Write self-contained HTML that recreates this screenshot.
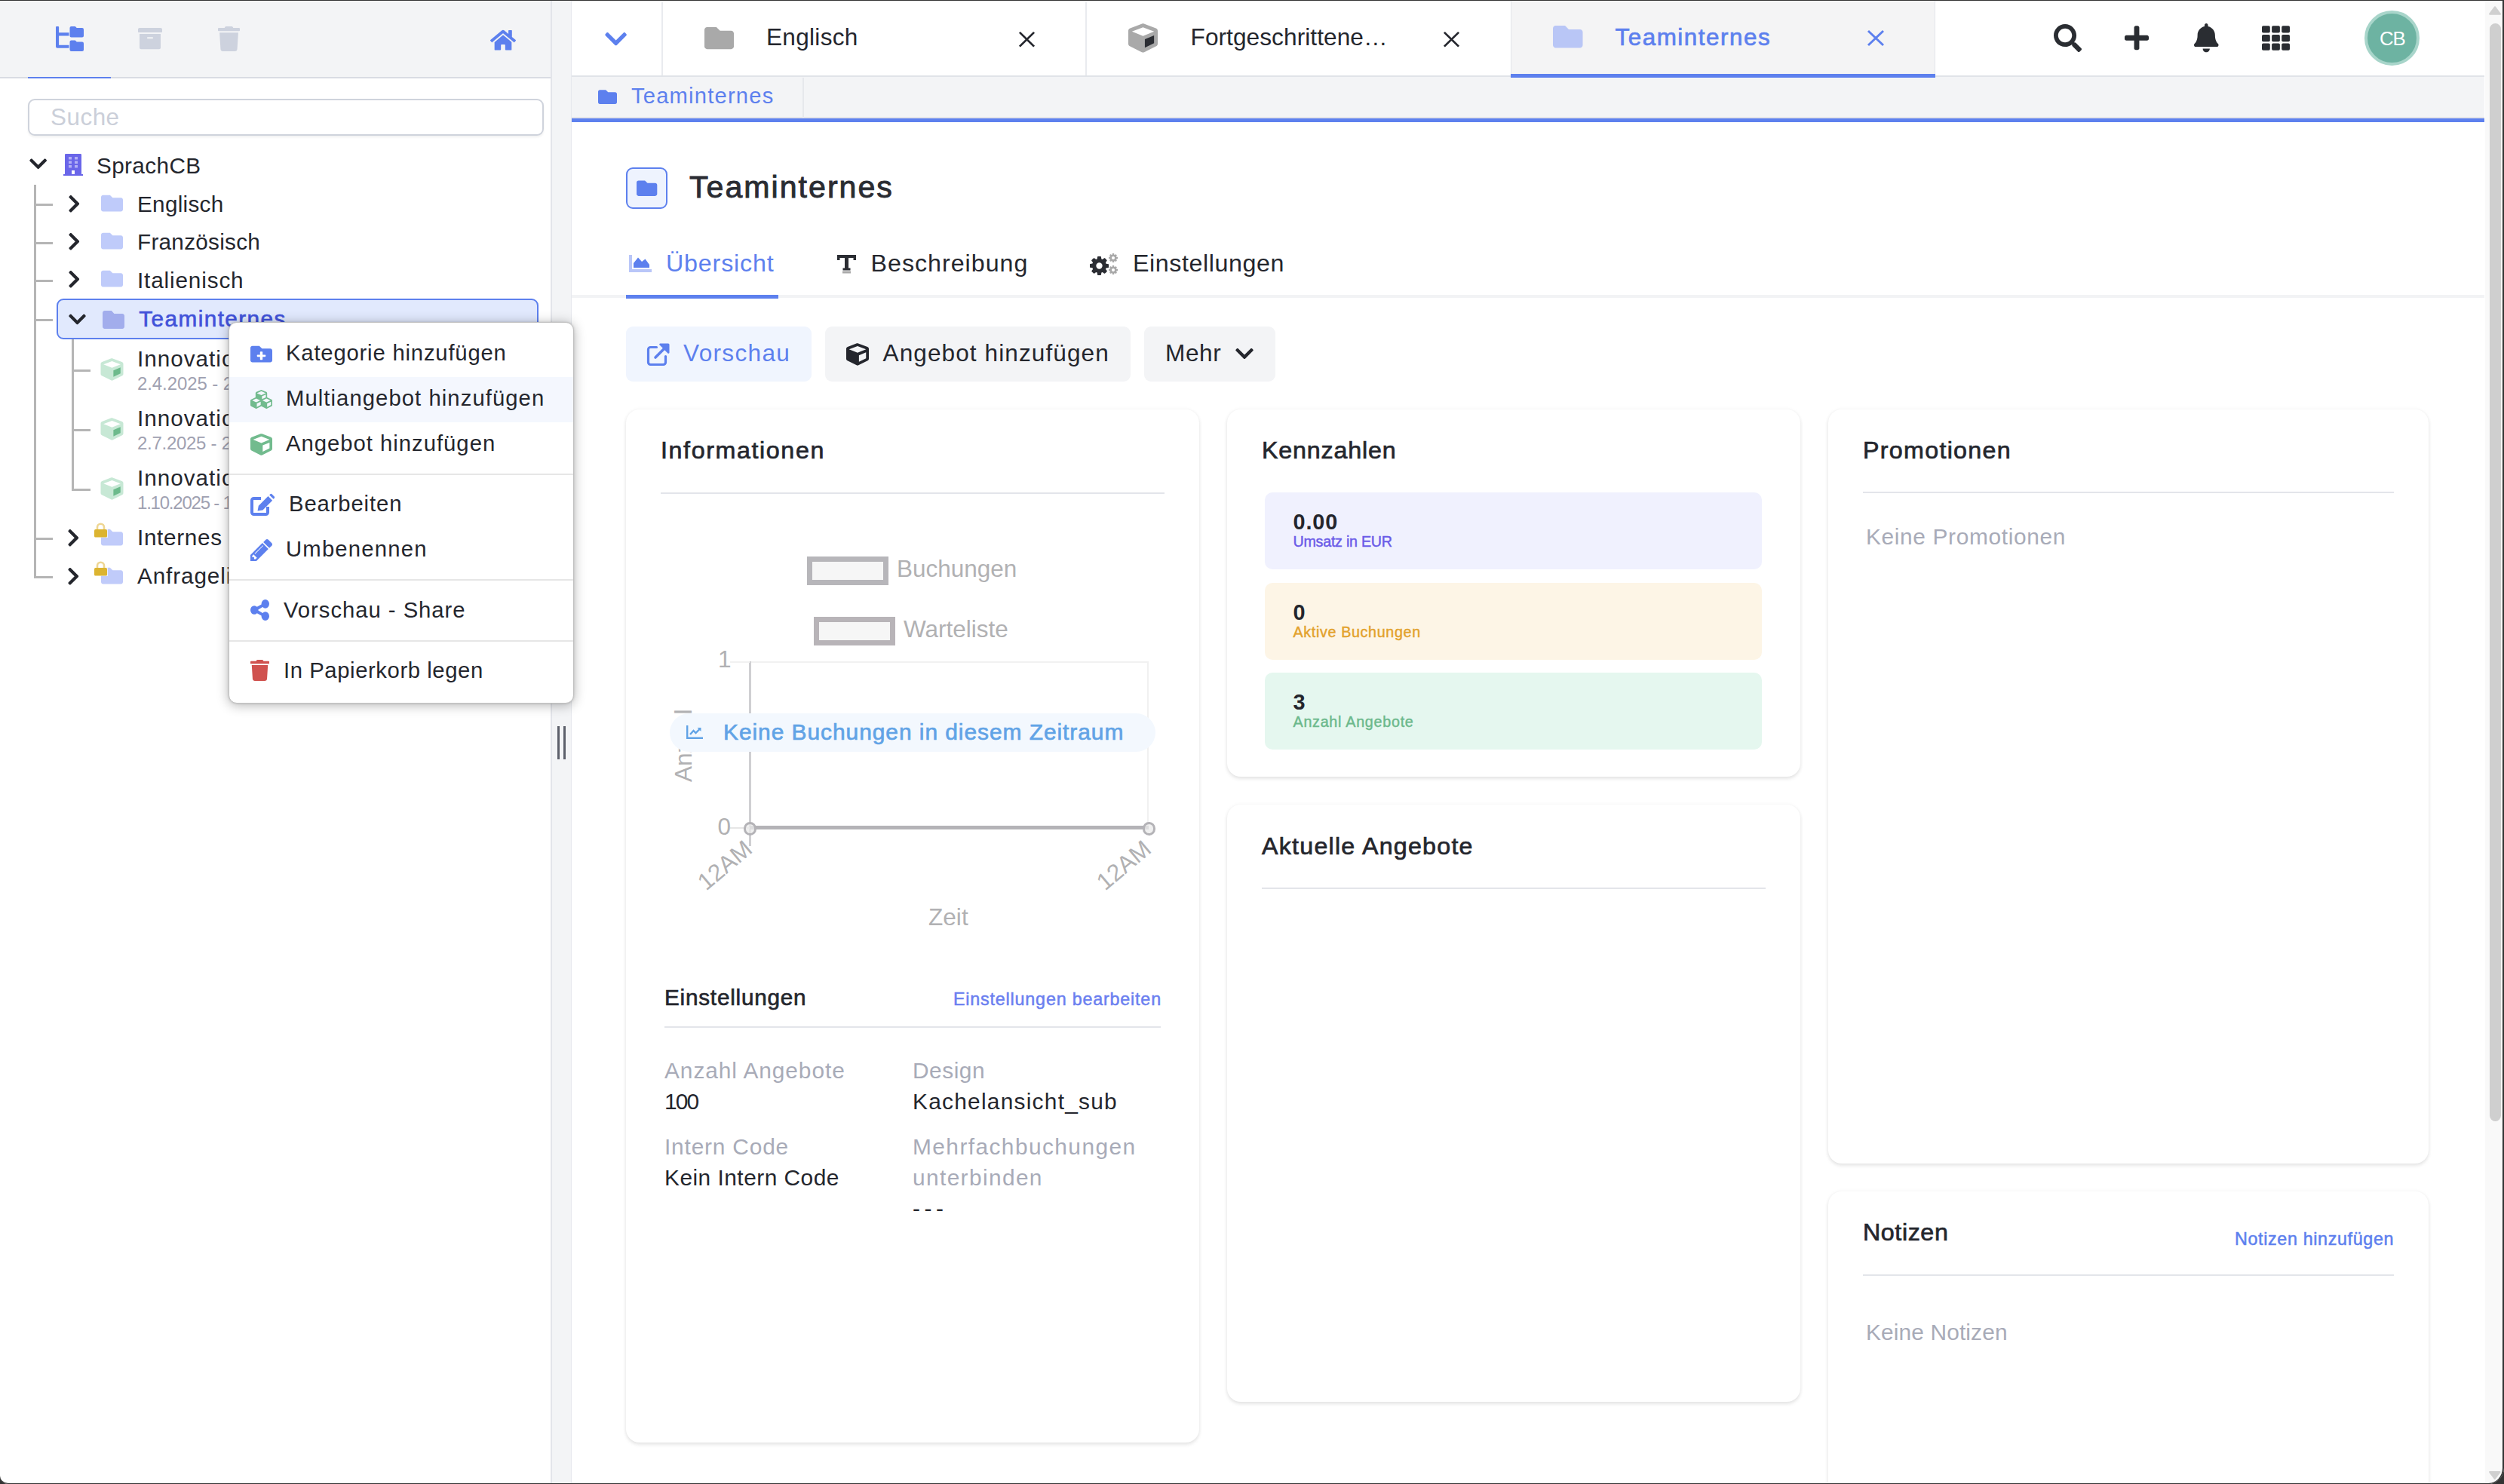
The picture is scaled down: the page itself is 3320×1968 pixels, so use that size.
<!DOCTYPE html>
<html lang="de"><head><meta charset="utf-8"><title>Teaminternes</title>
<style>
*{box-sizing:border-box;margin:0;padding:0}
html,body{width:3320px;height:1968px;overflow:hidden;background:#fff}
body{position:relative;font-family:'Liberation Sans',sans-serif;color:#24262d}
.b{position:absolute}
.t{position:absolute;white-space:nowrap;display:block}
.ic{position:absolute;display:block;overflow:visible}
.card{position:absolute;background:#fff;border-radius:18px;box-shadow:0 3px 5px rgba(0,0,0,.09),0 0 5px rgba(0,0,0,.055)}
.hr{position:absolute;height:2px;background:#e3e5ea}
</style></head>
<body>
<div class="b" style="left:0px;top:0px;width:731px;height:1968px;background:#fff"></div>
<div class="b" style="left:0px;top:0px;width:731px;height:104px;background:#f3f4f6;border-bottom:2px solid #d9dce3"></div>
<div class="b" style="left:37px;top:101.5px;width:110px;height:2.5px;background:#5d80ee"></div>
<svg class="ic" style="left:74px;top:35px;width:37px;height:33px;color:#5d80ee;" viewBox="0 0 576 512" preserveAspectRatio="xMidYMid meet" fill="currentColor"><path d="M0 16a16 16 0 0 1 16-16h32a16 16 0 0 1 16 16v112h208v64H64v192h208v64H32a32 32 0 0 1-32-32z"/><path d="M544 32H432L400 0h-80a32 32 0 0 0-32 32v160a32 32 0 0 0 32 32h224a32 32 0 0 0 32-32V64a32 32 0 0 0-32-32z"/><path d="M544 320H432l-32-32h-80a32 32 0 0 0-32 32v160a32 32 0 0 0 32 32h224a32 32 0 0 0 32-32V352a32 32 0 0 0-32-32z"/></svg>
<svg class="ic" style="left:183px;top:34.9px;width:32px;height:32.3px;color:#cdd2de;" viewBox="0 0 512 512" preserveAspectRatio="none" fill="currentColor"><path d="M32 448c0 17.7 14.3 32 32 32h384c17.7 0 32-14.3 32-32V160H32v288zm160-212c0-6.600 5.400-12 12-12h104c6.600 0 12 5.400 12 12v8c0 6.600-5.400 12-12 12H204c-6.600 0-12-5.400-12-12v-8zM480 32H32C14.300 32 0 46.300 0 64v48c0 8.800 7.200 16 16 16h480c8.800 0 16-7.200 16-16V64c0-17.700-14.300-32-32-32z" /></svg>
<svg class="ic" style="left:289px;top:35px;width:29px;height:33px;color:#cdd2de;" viewBox="0 0 448 512" preserveAspectRatio="none" fill="currentColor"><path d="M432 32H312l-9.4-18.7A24 24 0 0 0 281.1 0H166.8a23.72 23.72 0 0 0-21.4 13.3L136 32H16A16 16 0 0 0 0 48v32a16 16 0 0 0 16 16h416a16 16 0 0 0 16-16V48a16 16 0 0 0-16-16zM53.2 467a48 48 0 0 0 47.9 45h245.8a48 48 0 0 0 47.9-45L416 128H32z" /></svg>
<svg class="ic" style="left:650px;top:37.9px;width:34px;height:30.5px;color:#5d80ee;" viewBox="0 0 576 512" preserveAspectRatio="none" fill="currentColor"><path d="M280.37 148.26L96 300.11V464a16 16 0 0 0 16 16l112.06-.29a16 16 0 0 0 15.92-16V368a16 16 0 0 1 16-16h64a16 16 0 0 1 16 16v95.64a16 16 0 0 0 16 16.05L464 480a16 16 0 0 0 16-16V300L295.67 148.26a12.19 12.19 0 0 0-15.3 0zM571.6 251.47L488 182.56V44.05a12 12 0 0 0-12-12h-56a12 12 0 0 0-12 12v72.61L318.47 43a48 48 0 0 0-61 0L4.34 251.47a12 12 0 0 0-1.6 16.9l25.5 31A12 12 0 0 0 45.15 301l235.22-193.74a12.19 12.19 0 0 1 15.3 0L530.9 301a12 12 0 0 0 16.9-1.6l25.5-31a12 12 0 0 0-1.7-16.93z" /></svg>
<div class="b" style="left:730px;top:0px;width:28px;height:1968px;background:#f3f4f6;border-left:2px solid #e3e5ea;border-right:1px solid #e7e9ee"></div>
<div class="b" style="left:738.5px;top:963px;width:3px;height:44px;background:#5d606b"></div>
<div class="b" style="left:747px;top:963px;width:3px;height:44px;background:#5d606b"></div>
<div class="b" style="left:37px;top:131px;width:684px;height:49px;background:#fff;border:2px solid #cfd3dc;border-radius:9px;box-shadow:0 2px 3px rgba(0,0,0,.06)"></div>
<span class="t" style="left:67.00px;top:140.09px;font-size:31.38px;line-height:31.38px;color:#cbcfd9;font-weight:400;letter-spacing:0.522px;">Suche</span>
<div class="b" style="left:45px;top:245px;width:3px;height:520px;background:#b5b5b5"></div>
<div class="b" style="left:45px;top:269.5px;width:25px;height:3px;background:#b5b5b5"></div>
<div class="b" style="left:45px;top:320.5px;width:25px;height:3px;background:#b5b5b5"></div>
<div class="b" style="left:45px;top:371px;width:25px;height:3px;background:#b5b5b5"></div>
<div class="b" style="left:45px;top:423px;width:25px;height:3px;background:#b5b5b5"></div>
<div class="b" style="left:45px;top:713px;width:25px;height:3px;background:#b5b5b5"></div>
<div class="b" style="left:45px;top:764px;width:25px;height:3px;background:#b5b5b5"></div>
<div class="b" style="left:95px;top:450px;width:3px;height:200px;background:#b5b5b5"></div>
<div class="b" style="left:95px;top:490px;width:25px;height:3px;background:#b5b5b5"></div>
<div class="b" style="left:95px;top:569px;width:25px;height:3px;background:#b5b5b5"></div>
<div class="b" style="left:95px;top:648px;width:25px;height:3px;background:#b5b5b5"></div>
<svg class="ic" style="left:38.9px;top:204.3px;width:23.3px;height:26.6px;color:#24262d;" viewBox="0 0 448 512" preserveAspectRatio="none" fill="currentColor"><path d="M207.029 381.476L12.686 187.132c-9.373-9.373-9.373-24.569 0-33.941l22.667-22.667c9.357-9.357 24.522-9.375 33.901-.04L224 284.505l154.745-154.021c9.379-9.335 24.544-9.317 33.901.04l22.667 22.667c9.373 9.373 9.373 24.569 0 33.941L240.971 381.476c-9.373 9.372-24.569 9.372-33.942 0z" /></svg>
<svg class="ic" style="left:84px;top:204px;width:26px;height:29px" viewBox="0 0 26 29"><path d="M3.200 0H22.800A1.200 1.200 0 0 1 24 1.200V27H2V1.200A1.200 1.200 0 0 1 3.200 0z" fill="#6a66e9"/><rect x="0" y="27" width="26" height="2" fill="#6a66e9"/><g fill="#b3b0f5"><rect x="7" y="4" width="4" height="3.500"/><rect x="15" y="4" width="4" height="3.500"/><rect x="7" y="9.500" width="4" height="3.500"/><rect x="15" y="9.500" width="4" height="3.500"/><rect x="7" y="15" width="4" height="3.500"/><rect x="15" y="15" width="4" height="3.500"/></g><rect x="11" y="22" width="4" height="5" fill="#fff"/></svg>
<span class="t" style="left:128.00px;top:204.53px;font-size:29.68px;line-height:29.68px;color:#24262d;font-weight:400;letter-spacing:0.395px;">SprachCB</span>
<svg class="ic" style="left:89.7px;top:256.5px;width:16.6px;height:26.5px;color:#24262d;" viewBox="0 0 320 512" preserveAspectRatio="none" fill="currentColor"><path d="M285.476 272.971L91.132 467.314c-9.373 9.373-24.569 9.373-33.941 0l-22.667-22.667c-9.357-9.357-9.375-24.522-.04-33.901L188.505 256 34.484 101.255c-9.335-9.379-9.317-24.544.04-33.901l22.667-22.667c9.373-9.373 24.569-9.373 33.941 0L285.475 239.03c9.373 9.372 9.373 24.568.001 33.941z" /></svg>
<svg class="ic" style="left:134px;top:255.4px;width:29px;height:29px;color:#bfcbfa;" viewBox="0 0 512 512" preserveAspectRatio="none" fill="currentColor"><path d="M464 128H272l-64-64H48C21.49 64 0 85.49 0 112v288c0 26.51 21.49 48 48 48h416c26.51 0 48-21.49 48-48V176c0-26.51-21.49-48-48-48z" /></svg>
<span class="t" style="left:182.00px;top:255.53px;font-size:29.68px;line-height:29.68px;color:#24262d;font-weight:400;letter-spacing:0.293px;">Englisch</span>
<svg class="ic" style="left:89.7px;top:306.5px;width:16.6px;height:26.5px;color:#24262d;" viewBox="0 0 320 512" preserveAspectRatio="none" fill="currentColor"><path d="M285.476 272.971L91.132 467.314c-9.373 9.373-24.569 9.373-33.941 0l-22.667-22.667c-9.357-9.357-9.375-24.522-.04-33.901L188.505 256 34.484 101.255c-9.335-9.379-9.317-24.544.04-33.901l22.667-22.667c9.373-9.373 24.569-9.373 33.941 0L285.475 239.03c9.373 9.372 9.373 24.568.001 33.941z" /></svg>
<svg class="ic" style="left:134px;top:305.4px;width:29px;height:29px;color:#bfcbfa;" viewBox="0 0 512 512" preserveAspectRatio="none" fill="currentColor"><path d="M464 128H272l-64-64H48C21.49 64 0 85.49 0 112v288c0 26.51 21.49 48 48 48h416c26.51 0 48-21.49 48-48V176c0-26.51-21.49-48-48-48z" /></svg>
<span class="t" style="left:182.00px;top:305.53px;font-size:29.68px;line-height:29.68px;color:#24262d;font-weight:400;letter-spacing:0.283px;">Französisch</span>
<svg class="ic" style="left:89.7px;top:356.5px;width:16.6px;height:26.5px;color:#24262d;" viewBox="0 0 320 512" preserveAspectRatio="none" fill="currentColor"><path d="M285.476 272.971L91.132 467.314c-9.373 9.373-24.569 9.373-33.941 0l-22.667-22.667c-9.357-9.357-9.375-24.522-.04-33.901L188.505 256 34.484 101.255c-9.335-9.379-9.317-24.544.04-33.901l22.667-22.667c9.373-9.373 24.569-9.373 33.941 0L285.475 239.03c9.373 9.372 9.373 24.568.001 33.941z" /></svg>
<svg class="ic" style="left:134px;top:355.4px;width:29px;height:29px;color:#bfcbfa;" viewBox="0 0 512 512" preserveAspectRatio="none" fill="currentColor"><path d="M464 128H272l-64-64H48C21.49 64 0 85.49 0 112v288c0 26.51 21.49 48 48 48h416c26.51 0 48-21.49 48-48V176c0-26.51-21.49-48-48-48z" /></svg>
<span class="t" style="left:182.00px;top:356.53px;font-size:29.68px;line-height:29.68px;color:#24262d;font-weight:400;letter-spacing:0.865px;">Italienisch</span>
<div class="b" style="left:75px;top:396px;width:639px;height:54px;background:#e1e9fd;border:2px solid #5d80ee;border-radius:9px"></div>
<svg class="ic" style="left:91px;top:410px;width:23px;height:27px;color:#24262d;" viewBox="0 0 448 512" preserveAspectRatio="xMidYMid meet" fill="currentColor"><path d="M207.029 381.476L12.686 187.132c-9.373-9.373-9.373-24.569 0-33.941l22.667-22.667c9.357-9.357 24.522-9.375 33.901-.04L224 284.505l154.745-154.021c9.379-9.335 24.544-9.317 33.901.04l22.667 22.667c9.373 9.373 9.373 24.569 0 33.941L240.971 381.476c-9.373 9.372-24.569 9.372-33.942 0z" /></svg>
<svg class="ic" style="left:136px;top:408px;width:29px;height:32px;color:#a2adec;" viewBox="0 0 512 512" preserveAspectRatio="none" fill="currentColor"><path d="M464 128H272l-64-64H48C21.49 64 0 85.49 0 112v288c0 26.51 21.49 48 48 48h416c26.51 0 48-21.49 48-48V176c0-26.51-21.49-48-48-48z" /></svg>
<span class="t" style="left:184.30px;top:407.53px;font-size:29.68px;line-height:29.68px;color:#4152d9;font-weight:400;letter-spacing:1.449px;-webkit-text-stroke:0.65px #4152d9;">Teaminternes</span>
<svg class="ic" style="left:133px;top:475px;width:31px;height:30px" viewBox="0 0 512 512"><path d="M239.1 6.3l-208 78c-18.7 7-31.1 25-31.1 45v225.1c0 18.2 10.3 34.8 26.5 42.9l208 104c13.5 6.8 29.4 6.8 42.9 0l208-104c16.300-8.100 26.500-24.800 26.500-42.900V129.300c0-20-12.400-37.900-31.100-44.900l-208-78C262 2.200 250 2.200 239.100 6.300z" fill="#c7e8d5"/><path d="M256 68.400l192 72v1.100l-192 78-192-78v-1.100l192-72z" fill="#fff"/><path d="M288 424.400V275.500l160-65v133.900l-160 80z" fill="#6dba8c"/></svg>
<span class="t" style="left:182.00px;top:460.73px;font-size:29.68px;line-height:29.68px;color:#24262d;font-weight:400;letter-spacing:1.006px;">Innovationsworkshop</span>
<span class="t" style="left:182.00px;top:496.89px;font-size:23.96px;line-height:23.96px;color:#9fa1b1;font-weight:400;letter-spacing:-0.062px;">2.4.2025 - 2.4.2025</span>
<svg class="ic" style="left:133px;top:554px;width:31px;height:30px" viewBox="0 0 512 512"><path d="M239.1 6.3l-208 78c-18.7 7-31.1 25-31.1 45v225.1c0 18.2 10.3 34.8 26.5 42.9l208 104c13.5 6.8 29.4 6.8 42.9 0l208-104c16.300-8.100 26.500-24.800 26.500-42.900V129.300c0-20-12.400-37.900-31.100-44.900l-208-78C262 2.200 250 2.200 239.100 6.300z" fill="#c7e8d5"/><path d="M256 68.400l192 72v1.100l-192 78-192-78v-1.100l192-72z" fill="#fff"/><path d="M288 424.400V275.500l160-65v133.900l-160 80z" fill="#6dba8c"/></svg>
<span class="t" style="left:182.00px;top:539.73px;font-size:29.68px;line-height:29.68px;color:#24262d;font-weight:400;letter-spacing:1.006px;">Innovationsworkshop</span>
<span class="t" style="left:182.00px;top:575.89px;font-size:23.96px;line-height:23.96px;color:#9fa1b1;font-weight:400;letter-spacing:-0.259px;">2.7.2025 - 2.7.2025</span>
<svg class="ic" style="left:133px;top:633px;width:31px;height:30px" viewBox="0 0 512 512"><path d="M239.1 6.3l-208 78c-18.7 7-31.1 25-31.1 45v225.1c0 18.2 10.3 34.8 26.5 42.9l208 104c13.5 6.8 29.4 6.8 42.9 0l208-104c16.300-8.100 26.500-24.800 26.500-42.900V129.300c0-20-12.400-37.900-31.100-44.900l-208-78C262 2.200 250 2.200 239.100 6.300z" fill="#c7e8d5"/><path d="M256 68.400l192 72v1.100l-192 78-192-78v-1.100l192-72z" fill="#fff"/><path d="M288 424.400V275.500l160-65v133.900l-160 80z" fill="#6dba8c"/></svg>
<span class="t" style="left:182.00px;top:618.73px;font-size:29.68px;line-height:29.68px;color:#24262d;font-weight:400;letter-spacing:1.006px;">Innovationsworkshop</span>
<span class="t" style="left:182.00px;top:654.89px;font-size:23.96px;line-height:23.96px;color:#9fa1b1;font-weight:400;letter-spacing:-1.187px;">1.10.2025 - 1.10.2025</span>
<svg class="ic" style="left:89.2px;top:699.5px;width:16.6px;height:26.5px;color:#24262d;" viewBox="0 0 320 512" preserveAspectRatio="none" fill="currentColor"><path d="M285.476 272.971L91.132 467.314c-9.373 9.373-24.569 9.373-33.941 0l-22.667-22.667c-9.357-9.357-9.375-24.522-.04-33.901L188.505 256 34.484 101.255c-9.335-9.379-9.317-24.544.04-33.901l22.667-22.667c9.373-9.373 24.569-9.373 33.941 0L285.475 239.03c9.373 9.372 9.373 24.568.001 33.941z" /></svg>
<svg class="ic" style="left:134px;top:698.4px;width:29px;height:29px;color:#c0cbfa;" viewBox="0 0 512 512" preserveAspectRatio="none" fill="currentColor"><path d="M464 128H272l-64-64H48C21.49 64 0 85.49 0 112v288c0 26.51 21.49 48 48 48h416c26.51 0 48-21.49 48-48V176c0-26.51-21.49-48-48-48z" /></svg>
<svg class="ic" style="left:124px;top:692.5px;width:19px;height:20px" viewBox="0 0 19 20"><rect x="0" y="0" width="19" height="20" fill="#fff" opacity=".7"/><path d="M5 9.500V6.200a4.500 4.500 0 0 1 9 0V9.500" stroke="#eed693" stroke-width="2.600" fill="none"/><rect x="1" y="9.100" width="17" height="10.500" rx="1.600" fill="#dcb430"/></svg>
<span class="t" style="left:182.00px;top:698.03px;font-size:29.68px;line-height:29.68px;color:#24262d;font-weight:400;letter-spacing:0.682px;">Internes</span>
<svg class="ic" style="left:89.2px;top:750.5px;width:16.6px;height:26.5px;color:#24262d;" viewBox="0 0 320 512" preserveAspectRatio="none" fill="currentColor"><path d="M285.476 272.971L91.132 467.314c-9.373 9.373-24.569 9.373-33.941 0l-22.667-22.667c-9.357-9.357-9.375-24.522-.04-33.901L188.505 256 34.484 101.255c-9.335-9.379-9.317-24.544.04-33.901l22.667-22.667c9.373-9.373 24.569-9.373 33.941 0L285.475 239.03c9.373 9.372 9.373 24.568.001 33.941z" /></svg>
<svg class="ic" style="left:134px;top:749.4px;width:29px;height:29px;color:#c0cbfa;" viewBox="0 0 512 512" preserveAspectRatio="none" fill="currentColor"><path d="M464 128H272l-64-64H48C21.49 64 0 85.49 0 112v288c0 26.51 21.49 48 48 48h416c26.51 0 48-21.49 48-48V176c0-26.51-21.49-48-48-48z" /></svg>
<svg class="ic" style="left:124px;top:743.5px;width:19px;height:20px" viewBox="0 0 19 20"><rect x="0" y="0" width="19" height="20" fill="#fff" opacity=".7"/><path d="M5 9.500V6.200a4.500 4.500 0 0 1 9 0V9.500" stroke="#eed693" stroke-width="2.600" fill="none"/><rect x="1" y="9.100" width="17" height="10.500" rx="1.600" fill="#dcb430"/></svg>
<span class="t" style="left:182.00px;top:749.03px;font-size:29.68px;line-height:29.68px;color:#24262d;font-weight:400;letter-spacing:0.906px;">Anfrageliste</span>
<div class="b" style="left:758px;top:0px;width:2536px;height:102px;background:#fff;border-bottom:2px solid #e0e3e8"></div>
<svg class="ic" style="left:802.4px;top:35.2px;width:29.2px;height:33.4px;color:#5d80ee;" viewBox="0 0 448 512" preserveAspectRatio="none" fill="currentColor"><path d="M207.029 381.476L12.686 187.132c-9.373-9.373-9.373-24.569 0-33.941l22.667-22.667c9.357-9.357 24.522-9.375 33.901-.04L224 284.505l154.745-154.021c9.379-9.335 24.544-9.317 33.901.04l22.667 22.667c9.373 9.373 9.373 24.569 0 33.941L240.971 381.476c-9.373 9.372-24.569 9.372-33.942 0z" /></svg>
<div class="b" style="left:877px;top:3px;width:2px;height:97px;background:#e9ebef"></div>
<div class="b" style="left:1439px;top:3px;width:2px;height:97px;background:#e9ebef"></div>
<svg class="ic" style="left:934px;top:30.9px;width:39px;height:39px;color:#a9a9a9;" viewBox="0 0 512 512" preserveAspectRatio="none" fill="currentColor"><path d="M464 128H272l-64-64H48C21.49 64 0 85.49 0 112v288c0 26.51 21.49 48 48 48h416c26.51 0 48-21.49 48-48V176c0-26.51-21.49-48-48-48z" /></svg>
<span class="t" style="left:1016.00px;top:34.16px;font-size:31.54px;line-height:31.54px;color:#24262d;font-weight:400;letter-spacing:0.311px;">Englisch</span>
<svg class="ic" style="left:1350px;top:40.5px;width:23px;height:22.5px;color:#24262d;" viewBox="0 0 24 24" preserveAspectRatio="none" fill="currentColor"><path d="M2 2L22 22M22 2L2 22" stroke="currentColor" stroke-width="2.9" fill="none" stroke-linecap="butt"/></svg>
<svg class="ic" style="left:1495px;top:31px;width:41px;height:39px" viewBox="0 0 512 512"><path d="M239.1 6.3l-208 78c-18.7 7-31.1 25-31.1 45v225.1c0 18.2 10.3 34.8 26.5 42.9l208 104c13.5 6.8 29.4 6.8 42.9 0l208-104c16.300-8.100 26.500-24.800 26.500-42.900V129.300c0-20-12.400-37.900-31.100-44.900l-208-78C262 2.200 250 2.200 239.100 6.300z" fill="#a9a9a9"/><path d="M256 68.400l192 72v1.100l-192 78-192-78v-1.100l192-72z" fill="#fff"/><path d="M288 424.400V275.500l160-65v133.900l-160 80z" fill="#2b2d33"/></svg>
<span class="t" style="left:1578.50px;top:34.07px;font-size:31.64px;line-height:31.64px;color:#24262d;font-weight:400;letter-spacing:0.058px;">Fortgeschrittene…</span>
<svg class="ic" style="left:1913px;top:40.5px;width:23px;height:22.5px;color:#24262d;" viewBox="0 0 24 24" preserveAspectRatio="none" fill="currentColor"><path d="M2 2L22 22M22 2L2 22" stroke="currentColor" stroke-width="2.9" fill="none" stroke-linecap="butt"/></svg>
<div class="b" style="left:2003px;top:1px;width:563px;height:100px;background:#f4f4f5;border-left:1px solid #e3e5ea;border-right:1px solid #e3e5ea"></div>
<svg class="ic" style="left:2059px;top:29.2px;width:39.5px;height:39.5px;color:#b9c6f6;" viewBox="0 0 512 512" preserveAspectRatio="none" fill="currentColor"><path d="M464 128H272l-64-64H48C21.49 64 0 85.49 0 112v288c0 26.51 21.49 48 48 48h416c26.51 0 48-21.49 48-48V176c0-26.51-21.49-48-48-48z" /></svg>
<span class="t" style="left:2141.50px;top:33.69px;font-size:31.38px;line-height:31.38px;color:#5d80ee;font-weight:400;letter-spacing:1.528px;-webkit-text-stroke:0.69px #5d80ee;">Teaminternes</span>
<svg class="ic" style="left:2474.7px;top:39.1px;width:24px;height:23px;color:#5d80ee;" viewBox="0 0 24 24" preserveAspectRatio="none" fill="currentColor"><path d="M2 2L22 22M22 2L2 22" stroke="currentColor" stroke-width="2.9" fill="none" stroke-linecap="butt"/></svg>
<svg class="ic" style="left:2723px;top:32px;width:37px;height:37px;color:#2a2d32;" viewBox="0 0 512 512" preserveAspectRatio="xMidYMid meet" fill="currentColor"><path d="M505 442.7L405.3 343c-4.5-4.5-10.6-7-17-7H372c27.6-35.3 44-79.7 44-128C416 93.1 322.9 0 208 0S0 93.1 0 208s93.1 208 208 208c48.3 0 92.7-16.4 128-44v16.3c0 6.4 2.5 12.5 7 17l99.7 99.7c9.4 9.4 24.6 9.4 33.9 0l28.3-28.3c9.4-9.4 9.4-24.6.1-34zM208 336c-70.7 0-128-57.2-128-128 0-70.7 57.2-128 128-128 70.7 0 128 57.2 128 128 0 70.7-57.2 128-128 128z" /></svg>
<svg class="ic" style="left:2817px;top:31.7px;width:32px;height:36.6px;color:#2a2d32;" viewBox="0 0 448 512" preserveAspectRatio="none" fill="currentColor"><path d="M416 208H272V64c0-17.67-14.33-32-32-32h-32c-17.67 0-32 14.33-32 32v144H32c-17.67 0-32 14.33-32 32v32c0 17.67 14.33 32 32 32h144v144c0 17.67 14.33 32 32 32h32c17.67 0 32-14.33 32-32V304h144c17.67 0 32-14.33 32-32v-32c0-17.67-14.33-32-32-32z" /></svg>
<svg class="ic" style="left:2908.5px;top:31px;width:32.5px;height:38.3px;color:#2a2d32;" viewBox="0 0 448 512" preserveAspectRatio="none" fill="currentColor"><path d="M224 512c35.32 0 63.97-28.65 63.97-64H160.03c0 35.35 28.65 64 63.97 64zm215.39-149.71c-19.32-20.76-55.47-51.99-55.47-154.29 0-77.7-54.48-139.9-127.94-155.16V32c0-17.67-14.32-32-31.98-32s-31.98 14.33-31.98 32v20.84C118.56 68.1 64.08 130.3 64.08 208c0 102.3-36.15 133.53-55.47 154.29-6 6.45-8.66 14.16-8.61 21.71.11 16.4 12.98 32 32.1 32h383.8c19.12 0 32-15.6 32.1-32 .05-7.55-2.61-15.27-8.61-21.71z" /></svg>
<svg class="ic" style="left:2999px;top:31.7px;width:37px;height:37.1px;color:#2a2d32;" viewBox="0 0 512 512" preserveAspectRatio="none" fill="currentColor"><rect x="0.0" y="32" width="149.3" height="128" rx="24"/><rect x="181.3" y="32" width="149.3" height="128" rx="24"/><rect x="362.6" y="32" width="149.3" height="128" rx="24"/><rect x="0.0" y="192" width="149.3" height="128" rx="24"/><rect x="181.3" y="192" width="149.3" height="128" rx="24"/><rect x="362.6" y="192" width="149.3" height="128" rx="24"/><rect x="0.0" y="352" width="149.3" height="128" rx="24"/><rect x="181.3" y="352" width="149.3" height="128" rx="24"/><rect x="362.6" y="352" width="149.3" height="128" rx="24"/></svg>
<div class="b" style="left:3135px;top:14px;width:73px;height:73px;background:#6db3a2;border-radius:50%;border:4px solid #a8d5ca"></div>
<span class="t" style="left:3155.00px;top:38.77px;font-size:25.86px;line-height:25.86px;color:#fff;font-weight:400;letter-spacing:-1.075px;">CB</span>
<div class="b" style="left:758px;top:102px;width:2536px;height:56px;background:#f3f4f6"></div>
<div class="b" style="left:2003px;top:98px;width:563px;height:5px;background:#5d80ee"></div>
<div class="b" style="left:758px;top:155px;width:2536px;height:2px;background:#e4e5e9"></div>
<div class="b" style="left:758px;top:157px;width:2536px;height:5px;background:#5d80ee"></div>
<svg class="ic" style="left:793px;top:115.7px;width:25px;height:25px;color:#5d80ee;" viewBox="0 0 512 512" preserveAspectRatio="none" fill="currentColor"><path d="M464 128H272l-64-64H48C21.49 64 0 85.49 0 112v288c0 26.51 21.49 48 48 48h416c26.51 0 48-21.49 48-48V176c0-26.51-21.49-48-48-48z" /></svg>
<span class="t" style="left:837.00px;top:113.18px;font-size:29.15px;line-height:29.15px;color:#5d80ee;font-weight:400;letter-spacing:1.212px;">Teaminternes</span>
<div class="b" style="left:1064px;top:103px;width:2px;height:54px;background:#e6e8ec"></div>
<div class="b" style="left:830px;top:222px;width:55px;height:55px;background:#eef3fe;border:2px solid #5d80ee;border-radius:9px"></div>
<svg class="ic" style="left:843.9px;top:235.8px;width:27.3px;height:27.3px;color:#5d80ee;" viewBox="0 0 512 512" preserveAspectRatio="none" fill="currentColor"><path d="M464 128H272l-64-64H48C21.49 64 0 85.49 0 112v288c0 26.51 21.49 48 48 48h416c26.51 0 48-21.49 48-48V176c0-26.51-21.49-48-48-48z" /></svg>
<span class="t" style="left:914.00px;top:227.82px;font-size:41.13px;line-height:41.13px;color:#2a2c32;font-weight:400;letter-spacing:2.006px;-webkit-text-stroke:0.90px #2a2c32;">Teaminternes</span>
<div class="b" style="left:758px;top:391px;width:2536px;height:4px;background:#f2f3f5"></div>
<div class="b" style="left:830px;top:391px;width:202px;height:5px;background:#5d80ee"></div>
<svg class="ic" style="left:834px;top:338px;width:30px;height:23px" viewBox="0 0 30 23"><path d="M2 0V21H30" stroke="#b9c6f8" stroke-width="4" fill="none"/><path d="M6 17V11L12 3.500L17 9L21.500 5.500L27 13V17z" fill="#5d80ee"/></svg>
<span class="t" style="left:883.00px;top:332.87px;font-size:32.22px;line-height:32.22px;color:#5d80ee;font-weight:400;letter-spacing:0.827px;">Übersicht</span>
<svg class="ic" style="left:1110px;top:338px;width:25px;height:25px" viewBox="0 0 25 25"><path d="M0 0H25V7H21.500V4H15V17.500H17.500V20.500H7.500V17.500H10V4H3.500V7H0z" fill="#2b2d33"/><rect x="7" y="21.500" width="11" height="3" fill="#a9a9a9"/></svg>
<span class="t" style="left:1154.50px;top:332.87px;font-size:32.22px;line-height:32.22px;color:#24262d;font-weight:400;letter-spacing:0.985px;">Beschreibung</span>
<span class="t" style="left:1502.00px;top:332.87px;font-size:32.22px;line-height:32.22px;color:#24262d;font-weight:400;letter-spacing:0.576px;">Einstellungen</span>
<div class="b" style="left:830px;top:433px;width:246px;height:73px;background:#f0f5fe;border-radius:9px"></div>
<span class="t" style="left:906.00px;top:453.41px;font-size:31.59px;line-height:31.59px;color:#5d80ee;font-weight:400;letter-spacing:1.320px;">Vorschau</span>
<div class="b" style="left:1094px;top:433px;width:405px;height:73px;background:#f3f4f6;border-radius:9px"></div>
<svg class="ic" style="left:1122px;top:455px;width:30px;height:30px;color:#24262d;" viewBox="0 0 512 512" preserveAspectRatio="xMidYMid meet" fill="currentColor"><path d="M239.1 6.3l-208 78c-18.7 7-31.1 25-31.1 45v225.1c0 18.2 10.3 34.8 26.5 42.9l208 104c13.5 6.8 29.4 6.8 42.9 0l208-104c16.3-8.1 26.5-24.8 26.5-42.9V129.3c0-20-12.4-37.9-31.1-44.9l-208-78C262 2.2 250 2.2 239.1 6.3zM256 68.4l192 72v1.1l-192 78-192-78v-1.1l192-72zm32 356V275.5l160-65v133.9l-160 80z" /></svg>
<span class="t" style="left:1170.50px;top:453.41px;font-size:31.59px;line-height:31.59px;color:#24262d;font-weight:400;letter-spacing:1.079px;">Angebot hinzufügen</span>
<div class="b" style="left:1517px;top:433px;width:174px;height:73px;background:#f3f4f6;border-radius:9px"></div>
<span class="t" style="left:1545.00px;top:453.41px;font-size:31.59px;line-height:31.59px;color:#24262d;font-weight:400;letter-spacing:0.589px;">Mehr</span>
<svg class="ic" style="left:1638px;top:455px;width:24px;height:28px;color:#24262d;" viewBox="0 0 448 512" preserveAspectRatio="xMidYMid meet" fill="currentColor"><path d="M207.029 381.476L12.686 187.132c-9.373-9.373-9.373-24.569 0-33.941l22.667-22.667c9.357-9.357 24.522-9.375 33.901-.04L224 284.505l154.745-154.021c9.379-9.335 24.544-9.317 33.901.04l22.667 22.667c9.373 9.373 9.373 24.569 0 33.941L240.971 381.476c-9.373 9.372-24.569 9.372-33.942 0z" /></svg>
<svg class="ic" style="left:858px;top:455px;width:30px;height:30px" viewBox="0 0 30 30"><path d="M12.500 5.500H4.500A3 3 0 0 0 1.500 8.500V25.500A3 3 0 0 0 4.500 28.500H21.500A3 3 0 0 0 24.500 25.500V17.500" stroke="#5d80ee" stroke-width="3.200" fill="none" stroke-linecap="round"/><path d="M11 19L26.500 3.500" stroke="#5d80ee" stroke-width="3.600" fill="none" stroke-linecap="round"/><path d="M17.500 0.500H28a1.500 1.500 0 0 1 1.500 1.500V12.500a1.200 1.200 0 0 1-2.100 0.900L16.600 2.600A1.200 1.200 0 0 1 17.500 0.500z" fill="#5d80ee"/></svg>
<svg class="ic" style="left:1445px;top:340px;width:25px;height:25px;color:#2b2d33;" viewBox="0 0 1536 1536" preserveAspectRatio="xMidYMid meet" fill="currentColor"><g transform="translate(0,1408) scale(1,-1)"><path d="M949.0 459.0Q1024 534 1024.0 640.0Q1024 746 949.0 821.0Q874 896 768.0 896.0Q662 896 587.0 821.0Q512 746 512.0 640.0Q512 534 587.0 459.0Q662 384 768.0 384.0Q874 384 949.0 459.0ZM1536 749V527Q1536 515 1528.0 504.0Q1520 493 1508 491L1323 463Q1304 409 1284 372Q1319 322 1391 234Q1401 222 1401.0 209.0Q1401 196 1392 186Q1365 149 1293.0 78.0Q1221 7 1199 7Q1187 7 1173 16L1035 124Q991 101 944 86Q928 -50 915 -100Q908 -128 879 -128H657Q643 -128 632.5 -119.5Q622 -111 621 -98L593 86Q544 102 503 123L362 16Q352 7 337 7Q323 7 312 18Q186 132 147 186Q140 196 140 209Q140 221 148 232Q163 253 199.0 298.5Q235 344 253 369Q226 419 212 468L29 495Q16 497 8.0 507.5Q0 518 0 531V753Q0 765 8.0 776.0Q16 787 27 789L213 817Q227 863 252 909Q212 966 145 1047Q135 1059 135 1071Q135 1081 144 1094Q170 1130 242.5 1201.5Q315 1273 337 1273Q350 1273 363 1263L501 1156Q545 1179 592 1194Q608 1330 621 1380Q628 1408 657 1408H879Q893 1408 903.5 1399.5Q914 1391 915 1378L943 1194Q992 1178 1033 1157L1175 1264Q1184 1273 1199 1273Q1212 1273 1224 1263Q1353 1144 1389 1093Q1396 1085 1396 1071Q1396 1059 1388 1048Q1373 1027 1337.0 981.5Q1301 936 1283 911Q1309 861 1324 813L1507 785Q1520 783 1528.0 772.5Q1536 762 1536 749Z"/></g></svg>
<svg class="ic" style="left:1470px;top:336px;width:12px;height:12px;color:#a9a9a9;" viewBox="0 0 1536 1536" preserveAspectRatio="xMidYMid meet" fill="currentColor"><g transform="translate(0,1408) scale(1,-1)"><path d="M949.0 459.0Q1024 534 1024.0 640.0Q1024 746 949.0 821.0Q874 896 768.0 896.0Q662 896 587.0 821.0Q512 746 512.0 640.0Q512 534 587.0 459.0Q662 384 768.0 384.0Q874 384 949.0 459.0ZM1536 749V527Q1536 515 1528.0 504.0Q1520 493 1508 491L1323 463Q1304 409 1284 372Q1319 322 1391 234Q1401 222 1401.0 209.0Q1401 196 1392 186Q1365 149 1293.0 78.0Q1221 7 1199 7Q1187 7 1173 16L1035 124Q991 101 944 86Q928 -50 915 -100Q908 -128 879 -128H657Q643 -128 632.5 -119.5Q622 -111 621 -98L593 86Q544 102 503 123L362 16Q352 7 337 7Q323 7 312 18Q186 132 147 186Q140 196 140 209Q140 221 148 232Q163 253 199.0 298.5Q235 344 253 369Q226 419 212 468L29 495Q16 497 8.0 507.5Q0 518 0 531V753Q0 765 8.0 776.0Q16 787 27 789L213 817Q227 863 252 909Q212 966 145 1047Q135 1059 135 1071Q135 1081 144 1094Q170 1130 242.5 1201.5Q315 1273 337 1273Q350 1273 363 1263L501 1156Q545 1179 592 1194Q608 1330 621 1380Q628 1408 657 1408H879Q893 1408 903.5 1399.5Q914 1391 915 1378L943 1194Q992 1178 1033 1157L1175 1264Q1184 1273 1199 1273Q1212 1273 1224 1263Q1353 1144 1389 1093Q1396 1085 1396 1071Q1396 1059 1388 1048Q1373 1027 1337.0 981.5Q1301 936 1283 911Q1309 861 1324 813L1507 785Q1520 783 1528.0 772.5Q1536 762 1536 749Z"/></g></svg>
<svg class="ic" style="left:1470px;top:352px;width:12px;height:12px;color:#a9a9a9;" viewBox="0 0 1536 1536" preserveAspectRatio="xMidYMid meet" fill="currentColor"><g transform="translate(0,1408) scale(1,-1)"><path d="M949.0 459.0Q1024 534 1024.0 640.0Q1024 746 949.0 821.0Q874 896 768.0 896.0Q662 896 587.0 821.0Q512 746 512.0 640.0Q512 534 587.0 459.0Q662 384 768.0 384.0Q874 384 949.0 459.0ZM1536 749V527Q1536 515 1528.0 504.0Q1520 493 1508 491L1323 463Q1304 409 1284 372Q1319 322 1391 234Q1401 222 1401.0 209.0Q1401 196 1392 186Q1365 149 1293.0 78.0Q1221 7 1199 7Q1187 7 1173 16L1035 124Q991 101 944 86Q928 -50 915 -100Q908 -128 879 -128H657Q643 -128 632.5 -119.5Q622 -111 621 -98L593 86Q544 102 503 123L362 16Q352 7 337 7Q323 7 312 18Q186 132 147 186Q140 196 140 209Q140 221 148 232Q163 253 199.0 298.5Q235 344 253 369Q226 419 212 468L29 495Q16 497 8.0 507.5Q0 518 0 531V753Q0 765 8.0 776.0Q16 787 27 789L213 817Q227 863 252 909Q212 966 145 1047Q135 1059 135 1071Q135 1081 144 1094Q170 1130 242.5 1201.5Q315 1273 337 1273Q350 1273 363 1263L501 1156Q545 1179 592 1194Q608 1330 621 1380Q628 1408 657 1408H879Q893 1408 903.5 1399.5Q914 1391 915 1378L943 1194Q992 1178 1033 1157L1175 1264Q1184 1273 1199 1273Q1212 1273 1224 1263Q1353 1144 1389 1093Q1396 1085 1396 1071Q1396 1059 1388 1048Q1373 1027 1337.0 981.5Q1301 936 1283 911Q1309 861 1324 813L1507 785Q1520 783 1528.0 772.5Q1536 762 1536 749Z"/></g></svg>
<div class="card" style="left:830px;top:543px;width:760px;height:1370px"></div>
<div class="card" style="left:1627px;top:543px;width:760px;height:487px"></div>
<div class="card" style="left:1627px;top:1067px;width:760px;height:792px"></div>
<div class="card" style="left:2424px;top:543px;width:796px;height:1000px"></div>
<div class="card" style="left:2424px;top:1580px;width:796px;height:600px"></div>
<span class="t" style="left:876.00px;top:581.37px;font-size:32.22px;line-height:32.22px;color:#24262d;font-weight:400;letter-spacing:1.612px;-webkit-text-stroke:0.71px #24262d;">Informationen</span>
<div class="hr" style="left:876px;top:652.5px;width:668px"></div>
<div class="b" style="left:1070px;top:738px;width:108px;height:38px;background:#f6f6f6;border:7px solid #b7b6ba"></div>
<span class="t" style="left:1189px;top:738.99px;font-size:31.50px;line-height:31.50px;color:#b1b1b3;font-weight:400;font-family:'Liberation Sans',sans-serif;">Buchungen</span>
<div class="b" style="left:1079px;top:818px;width:108px;height:38px;background:#f6f6f6;border:7px solid #b8b4b8"></div>
<span class="t" style="left:1198px;top:818.99px;font-size:31.50px;line-height:31.50px;color:#b1b1b3;font-weight:400;font-family:'Liberation Sans',sans-serif;">Warteliste</span>
<div class="b" style="left:994px;top:877px;width:529px;height:221px;border:2px solid #f1f1f1;border-left:none;border-bottom:none"></div>
<div class="b" style="left:993px;top:877px;width:3px;height:245px;background:#cfcfd2"></div>
<div class="b" style="left:968px;top:877px;width:26px;height:2px;background:#f1f1f1"></div>
<div class="b" style="left:968px;top:1097px;width:26px;height:2px;background:#e6e6e6"></div>
<div class="b" style="left:994px;top:1095px;width:529px;height:5px;background:#b4b3b7"></div>
<div class="b" style="left:985.5px;top:1090px;width:17.5px;height:17.5px;border:3px solid #b4b3b7;border-radius:50%;background:rgba(235,235,235,.75)"></div>
<div class="b" style="left:1514.5px;top:1090px;width:17.5px;height:17.5px;border:3px solid #b4b3b7;border-radius:50%;background:rgba(235,235,235,.75)"></div>
<span class="t" style="left:952px;top:858.79px;font-size:31.50px;line-height:31.50px;color:#b1b1b3;font-weight:400;font-family:'Liberation Sans',sans-serif;">1</span>
<span class="t" style="left:951.5px;top:1081.49px;font-size:31.50px;line-height:31.50px;color:#b1b1b3;font-weight:400;font-family:'Liberation Sans',sans-serif;">0</span>
<span class="t" style="left:0px;top:-26.01px;font-size:31.50px;line-height:31.50px;color:#b1b1b3;font-weight:400;left:858.5px;top:973px;transform:rotate(-90deg);transform-origin:center;font-family:'Liberation Sans',sans-serif;">Anzahl</span>
<span class="t" style="left:0px;top:-26.01px;font-size:31.50px;line-height:31.50px;color:#b1b1b3;font-weight:400;left:920px;top:1131.5px;transform:rotate(-40deg);transform-origin:center;font-family:'Liberation Sans',sans-serif;">12AM</span>
<span class="t" style="left:0px;top:-26.01px;font-size:31.50px;line-height:31.50px;color:#b1b1b3;font-weight:400;left:1449px;top:1131.5px;transform:rotate(-40deg);transform-origin:center;font-family:'Liberation Sans',sans-serif;">12AM</span>
<span class="t" style="left:1231px;top:1200.90px;font-size:31.60px;line-height:31.60px;color:#b1b1b3;font-weight:400;font-family:'Liberation Sans',sans-serif;">Zeit</span>
<div class="b" style="left:888px;top:946px;width:644px;height:51px;background:#f3f8fe;border-radius:26px"></div>
<svg class="ic" style="left:910px;top:962px;width:22px;height:18px" viewBox="0 0 22 18"><path d="M1.200 0V16.800H22" stroke="#61a3e6" stroke-width="2.400" fill="none"/><path d="M5 12L9.500 7L12.500 10L18 4.500" stroke="#61a3e6" stroke-width="2.400" fill="none"/><path d="M14.500 3H19.500V8z" fill="#61a3e6"/></svg>
<span class="t" style="left:959.00px;top:956.31px;font-size:29.95px;line-height:29.95px;color:#61a3e6;font-weight:400;letter-spacing:0.944px;-webkit-text-stroke:0.66px #61a3e6;">Keine Buchungen in diesem Zeitraum</span>
<span class="t" style="left:881.00px;top:1307.53px;font-size:29.68px;line-height:29.68px;color:#24262d;font-weight:400;letter-spacing:0.787px;-webkit-text-stroke:0.65px #24262d;">Einstellungen</span>
<span class="t" style="left:1264.00px;top:1313.92px;font-size:23.32px;line-height:23.32px;color:#6b7ff0;font-weight:400;letter-spacing:0.803px;-webkit-text-stroke:0.51px #6b7ff0;">Einstellungen bearbeiten</span>
<div class="hr" style="left:881px;top:1361px;width:658px"></div>
<span class="t" style="left:881.00px;top:1405.35px;font-size:29.89px;line-height:29.89px;color:#a8abb8;font-weight:400;letter-spacing:0.918px;">Anzahl Angebote</span>
<span class="t" style="left:881.00px;top:1446.35px;font-size:29.89px;line-height:29.89px;color:#24262d;font-weight:400;letter-spacing:-1.813px;">100</span>
<span class="t" style="left:881.00px;top:1506.35px;font-size:29.89px;line-height:29.89px;color:#a8abb8;font-weight:400;letter-spacing:0.811px;">Intern Code</span>
<span class="t" style="left:881.00px;top:1547.35px;font-size:29.89px;line-height:29.89px;color:#24262d;font-weight:400;letter-spacing:0.478px;">Kein Intern Code</span>
<span class="t" style="left:1210.00px;top:1405.35px;font-size:29.89px;line-height:29.89px;color:#a8abb8;font-weight:400;letter-spacing:0.518px;">Design</span>
<span class="t" style="left:1210.00px;top:1446.35px;font-size:29.89px;line-height:29.89px;color:#24262d;font-weight:400;letter-spacing:1.246px;">Kachelansicht_sub</span>
<span class="t" style="left:1210.00px;top:1506.35px;font-size:29.89px;line-height:29.89px;color:#a8abb8;font-weight:400;letter-spacing:1.420px;">Mehrfachbuchungen</span>
<span class="t" style="left:1210.00px;top:1547.35px;font-size:29.89px;line-height:29.89px;color:#a8abb8;font-weight:400;letter-spacing:1.367px;">unterbinden</span>
<span class="t" style="left:1210.00px;top:1588.35px;font-size:29.89px;line-height:29.89px;color:#24262d;font-weight:400;letter-spacing:5.581px;">---</span>
<span class="t" style="left:1673.00px;top:581.37px;font-size:32.22px;line-height:32.22px;color:#24262d;font-weight:400;letter-spacing:0.836px;-webkit-text-stroke:0.71px #24262d;">Kennzahlen</span>
<div class="b" style="left:1677px;top:653px;width:659px;height:101.5px;background:#f0f1fe;border-radius:10px"></div>
<span class="t" style="left:1714.50px;top:678.25px;font-size:28.83px;line-height:28.83px;color:#24262d;font-weight:700;letter-spacing:0.912px;">0.00</span>
<span class="t" style="left:1714.50px;top:709.48px;font-size:19.72px;line-height:19.72px;color:#6a5be8;font-weight:400;letter-spacing:-0.263px;-webkit-text-stroke:0.43px #6a5be8;">Umsatz in EUR</span>
<div class="b" style="left:1677px;top:773px;width:659px;height:101.5px;background:#fdf5e6;border-radius:10px"></div>
<span class="t" style="left:1714.50px;top:798.25px;font-size:28.83px;line-height:28.83px;color:#24262d;font-weight:700;letter-spacing:1.543px;">0</span>
<span class="t" style="left:1714.50px;top:829.48px;font-size:19.72px;line-height:19.72px;color:#e3a22c;font-weight:400;letter-spacing:0.653px;-webkit-text-stroke:0.43px #e3a22c;">Aktive Buchungen</span>
<div class="b" style="left:1677px;top:892px;width:659px;height:101.5px;background:#e5f7ef;border-radius:10px"></div>
<span class="t" style="left:1714.50px;top:917.25px;font-size:28.83px;line-height:28.83px;color:#24262d;font-weight:700;letter-spacing:0.261px;">3</span>
<span class="t" style="left:1714.50px;top:948.48px;font-size:19.72px;line-height:19.72px;color:#6cb98c;font-weight:400;letter-spacing:0.738px;-webkit-text-stroke:0.43px #6cb98c;">Anzahl Angebote</span>
<span class="t" style="left:1673.00px;top:1106.37px;font-size:32.22px;line-height:32.22px;color:#24262d;font-weight:400;letter-spacing:1.236px;-webkit-text-stroke:0.71px #24262d;">Aktuelle Angebote</span>
<div class="hr" style="left:1673px;top:1177px;width:668px"></div>
<span class="t" style="left:2470.00px;top:581.37px;font-size:32.22px;line-height:32.22px;color:#24262d;font-weight:400;letter-spacing:1.301px;-webkit-text-stroke:0.71px #24262d;">Promotionen</span>
<div class="hr" style="left:2470px;top:652px;width:704px"></div>
<span class="t" style="left:2474.00px;top:697.35px;font-size:29.89px;line-height:29.89px;color:#a8abb8;font-weight:400;letter-spacing:0.637px;">Keine Promotionen</span>
<span class="t" style="left:2470.00px;top:1618.37px;font-size:32.22px;line-height:32.22px;color:#24262d;font-weight:400;letter-spacing:0.594px;-webkit-text-stroke:0.71px #24262d;">Notizen</span>
<span class="t" style="left:2963.00px;top:1631.92px;font-size:23.32px;line-height:23.32px;color:#5d80ee;font-weight:400;letter-spacing:0.640px;-webkit-text-stroke:0.51px #5d80ee;">Notizen hinzufügen</span>
<div class="hr" style="left:2470px;top:1690px;width:704px"></div>
<span class="t" style="left:2474.00px;top:1752.35px;font-size:29.89px;line-height:29.89px;color:#a8abb8;font-weight:400;letter-spacing:0.125px;">Keine Notizen</span>
<div class="b" style="left:3295px;top:0px;width:24px;height:1968px;background:#f9f9f9"></div>
<div class="b" style="left:3300.5px;top:31px;width:15px;height:1456px;background:#cfcfcf;border-radius:7.5px"></div>
<svg class="ic" style="left:3300px;top:8px;width:16px;height:12px" viewBox="0 0 14 10"><path d="M7 1L13 9H1z" fill="#d0d0d0" stroke="#d0d0d0" stroke-width="2" stroke-linejoin="round"/></svg>
<svg class="ic" style="left:3300px;top:1950.5px;width:15.5px;height:11px" viewBox="0 0 14 10"><path d="M7 9L13 1H1z" fill="#d0d0d0" stroke="#d0d0d0" stroke-width="2" stroke-linejoin="round"/></svg>
<div class="b" style="left:303px;top:427px;width:458px;height:506px;background:#fff;border:1px solid #c0c0c0;border-radius:11px;box-shadow:0 2px 16px rgba(0,0,0,.3),0 0 3px rgba(0,0,0,.15)"></div>
<div class="b" style="left:304px;top:500px;width:456px;height:60px;background:#f4f7fe"></div>
<div class="b" style="left:304px;top:628px;width:456px;height:2px;background:#e6e6e6"></div>
<div class="b" style="left:304px;top:768px;width:456px;height:2px;background:#e6e6e6"></div>
<div class="b" style="left:304px;top:849px;width:456px;height:2px;background:#e6e6e6"></div>
<svg class="ic" style="left:332px;top:455px;width:29px;height:29px;color:#5d80ee;" viewBox="0 0 512 512" preserveAspectRatio="none" fill="currentColor"><path d="M464 128H272l-64-64H48C21.49 64 0 85.49 0 112v288c0 26.51 21.49 48 48 48h416c26.51 0 48-21.49 48-48V176c0-26.51-21.49-48-48-48z" /><path d="M240 200h32a14 14 0 0 1 14 14v58h58a14 14 0 0 1 14 14v20a14 14 0 0 1-14 14h-58v58a14 14 0 0 1-14 14h-32a14 14 0 0 1-14-14v-58h-58a14 14 0 0 1-14-14v-20a14 14 0 0 1 14-14h58v-58a14 14 0 0 1 14-14z" fill="#fff"/></svg>
<span class="t" style="left:379.00px;top:453.99px;font-size:29.26px;line-height:29.26px;color:#24262d;font-weight:400;letter-spacing:0.809px;">Kategorie hinzufügen</span>
<svg class="ic" style="left:332px;top:517px;width:29px;height:25px;color:#72bb8e;" viewBox="0 0 2176 1792.0" preserveAspectRatio="none" fill="currentColor"><g transform="translate(0,1536.0) scale(1,-1)"><path d="M640 -96 1024 96V410L640 246ZM576 358 980 531 576 704 172 531ZM1664 -96 2048 96V410L1664 246ZM1600 358 2004 531 1600 704 1196 531ZM1152 651 1536 816V1082L1152 918ZM1088 1030 1529 1219 1088 1408 647 1219ZM2176 512V96Q2176 60 2157.0 29.0Q2138 -2 2105 -18L1657 -242Q1632 -256 1600.0 -256.0Q1568 -256 1543 -242L1095 -18Q1091 -16 1088 -14Q1086 -16 1081 -18L633 -242Q608 -256 576.0 -256.0Q544 -256 519 -242L71 -18Q38 -2 19.0 29.0Q0 60 0 96V512Q0 550 21.5 582.0Q43 614 78 630L512 816V1216Q512 1254 533.5 1286.0Q555 1318 590 1334L1038 1526Q1061 1536 1088.0 1536.0Q1115 1536 1138 1526L1586 1334Q1621 1318 1642.5 1286.0Q1664 1254 1664 1216V816L2098 630Q2134 614 2155.0 582.0Q2176 550 2176 512Z"/></g></svg>
<span class="t" style="left:379.00px;top:513.99px;font-size:29.26px;line-height:29.26px;color:#24262d;font-weight:400;letter-spacing:1.066px;">Multiangebot hinzufügen</span>
<svg class="ic" style="left:332px;top:575px;width:29px;height:29px;color:#72bb8e;" viewBox="0 0 512 512" preserveAspectRatio="xMidYMid meet" fill="currentColor"><path d="M239.1 6.3l-208 78c-18.7 7-31.1 25-31.1 45v225.1c0 18.2 10.3 34.8 26.5 42.9l208 104c13.5 6.8 29.4 6.8 42.9 0l208-104c16.3-8.1 26.5-24.8 26.5-42.9V129.3c0-20-12.4-37.9-31.1-44.9l-208-78C262 2.2 250 2.2 239.1 6.3zM256 68.4l192 72v1.1l-192 78-192-78v-1.1l192-72zm32 356V275.5l160-65v133.9l-160 80z" /></svg>
<span class="t" style="left:379.00px;top:573.99px;font-size:29.26px;line-height:29.26px;color:#24262d;font-weight:400;letter-spacing:0.997px;">Angebot hinzufügen</span>
<svg class="ic" style="left:332px;top:655px;width:32px;height:29px" viewBox="0 0 32 29"><path d="M14 6H4.500A2.500 2.500 0 0 0 2 8.500V24.500A2.500 2.500 0 0 0 4.500 27H20.500A2.500 2.500 0 0 0 23 24.500V17" stroke="#5d80ee" stroke-width="4" fill="none"/><path d="M9.500 22.500L10.800 15.800L23.500 3.100L29.100 8.700L16.400 21.400z" fill="#5d80ee"/><path d="M25.200 1.400L26.300 0.300A1.600 1.600 0 0 1 28.500 0.300L31.700 3.500A1.600 1.600 0 0 1 31.700 5.700L30.600 6.800z" fill="#5d80ee"/></svg>
<span class="t" style="left:383.00px;top:654.39px;font-size:29.26px;line-height:29.26px;color:#24262d;font-weight:400;letter-spacing:0.883px;">Bearbeiten</span>
<svg class="ic" style="left:332px;top:715px;width:29px;height:29px;color:#5d80ee;" viewBox="0 0 1515 1515" preserveAspectRatio="xMidYMid meet" fill="currentColor"><g transform="translate(0,1387) scale(1,-1)"><path d="M363 0 454 91 219 326 128 235V128H256V0ZM886 928Q886 950 864 950Q854 950 847 943L305 401Q298 394 298 384Q298 362 320 362Q330 362 337 369L879 911Q886 918 886 928ZM832 1120 1248 704 416 -128H0V288ZM1515 1024Q1515 971 1478 934L1312 768L896 1184L1062 1349Q1098 1387 1152 1387Q1205 1387 1243 1349L1478 1115Q1515 1076 1515 1024Z"/></g></svg>
<span class="t" style="left:379.00px;top:714.39px;font-size:29.26px;line-height:29.26px;color:#24262d;font-weight:400;letter-spacing:1.200px;">Umbenennen</span>
<svg class="ic" style="left:332px;top:795px;width:25px;height:28px;color:#5d80ee;" viewBox="0 0 1536.0 1536.0" preserveAspectRatio="none" fill="currentColor"><g transform="translate(-0.0,1408.0) scale(1,-1)"><path d="M1216 512Q1349 512 1442.5 418.5Q1536 325 1536.0 192.0Q1536 59 1442.5 -34.5Q1349 -128 1216.0 -128.0Q1083 -128 989.5 -34.5Q896 59 896 192Q896 204 898 226L538 406Q446 320 320 320Q187 320 93.5 413.5Q0 507 0.0 640.0Q0 773 93.5 866.5Q187 960 320 960Q446 960 538 874L898 1054Q896 1076 896 1088Q896 1221 989.5 1314.5Q1083 1408 1216.0 1408.0Q1349 1408 1442.5 1314.5Q1536 1221 1536.0 1088.0Q1536 955 1442.5 861.5Q1349 768 1216 768Q1090 768 998 854L638 674Q640 652 640.0 640.0Q640 628 638 606L998 426Q1090 512 1216 512Z"/></g></svg>
<span class="t" style="left:376.00px;top:794.59px;font-size:29.26px;line-height:29.26px;color:#24262d;font-weight:400;letter-spacing:0.971px;">Vorschau - Share</span>
<svg class="ic" style="left:332px;top:875px;width:25px;height:28px;color:#d0524f;" viewBox="0 0 448 512" preserveAspectRatio="none" fill="currentColor"><path d="M432 32H312l-9.4-18.7A24 24 0 0 0 281.1 0H166.8a23.72 23.72 0 0 0-21.4 13.3L136 32H16A16 16 0 0 0 0 48v32a16 16 0 0 0 16 16h416a16 16 0 0 0 16-16V48a16 16 0 0 0-16-16zM53.2 467a48 48 0 0 0 47.9 45h245.8a48 48 0 0 0 47.9-45L416 128H32z" /></svg>
<span class="t" style="left:376.00px;top:875.39px;font-size:29.26px;line-height:29.26px;color:#24262d;font-weight:400;letter-spacing:0.583px;">In Papierkorb legen</span>
<div class="b" style="left:0px;top:0px;width:3320px;height:1px;background:#2d2d2d"></div>
<div class="b" style="left:0px;top:0px;width:3320px;height:1968px;border:solid #333;border-width:1px 2px 1.5px 0;border-radius:0 0 21px 11px;pointer-events:none;box-shadow:0 0 0 30px #333"></div>
</body></html>
